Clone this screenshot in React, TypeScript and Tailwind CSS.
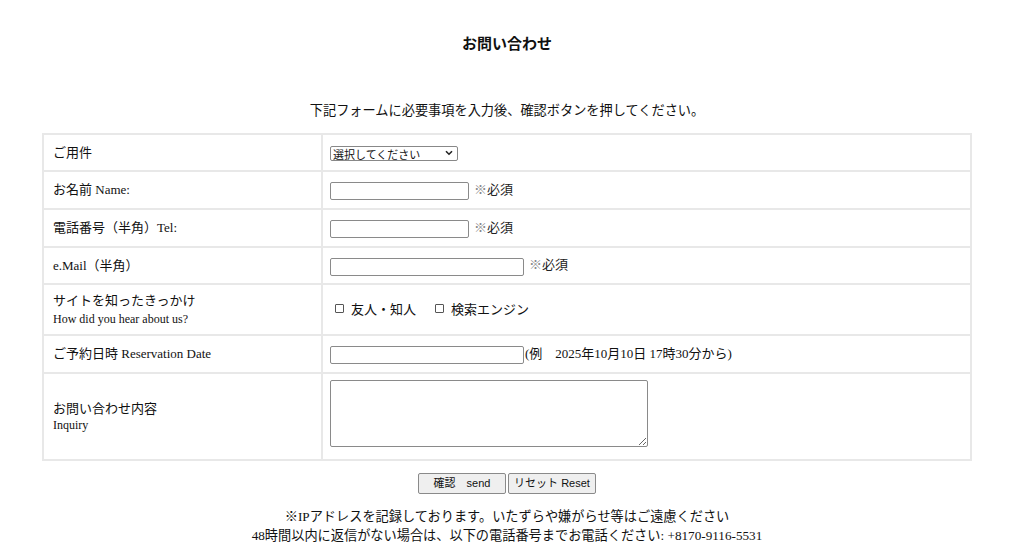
import React from "react";

const cellL = "border-2 border-[#e8e8e8] pl-[9px] pr-2 align-middle text-left";
const cellR = "border-2 border-[#e8e8e8] pl-[7px] pr-2 align-middle text-left";

function Req() {
  return <span className="ml-[5px] text-[13px] text-[#222]"><span className="text-[#888]">※</span>必須</span>;
}

function Box() {
  return <span className="inline-block w-[9px] h-[9px] border border-[#555] rounded-[1px] mr-[7px] align-middle relative top-[-2px]" />;
}

export default function App() {
  return (
    <div className="w-[1024px] h-[545px] bg-white text-[#111] font-['Liberation_Serif','Noto_Sans_CJK_JP',serif] text-[13px] overflow-hidden">
      <div className="w-[1014px]">
        <div className="pt-[32px] text-center font-['Noto_Sans_CJK_JP',sans-serif] font-bold text-[15px] leading-[21px]">お問い合わせ</div>
        <div className="mt-[48px] text-center leading-[20px] text-[13.2px]">下記フォームに必要事項を入力後、確認ボタンを押してください。</div>
        <div className="mt-[12px] pl-[42px] pr-[42px]">
          <table className="w-full border-collapse border-2 border-[#e8e8e8]">
            <tbody>
              <tr className="h-[37px]">
                <td className={cellL + " w-[279px]"}>ご用件</td>
                <td className={cellR}>
                  <div className="relative inline-block align-middle">
                    <select className="appearance-none w-[128px] h-[15px] border border-[#888] rounded-[2px] bg-white text-[11px] leading-[12px] pl-[2px] font-['Noto_Sans_CJK_JP',sans-serif] text-[#111] block">
                      <option>選択してください</option>
                    </select>
                    <svg className="absolute right-[5px] top-[4px] pointer-events-none" width="8" height="6" viewBox="0 0 8 6">
                      <path d="M1 1.2 L4 4.2 L7 1.2" fill="none" stroke="#222" strokeWidth="1.6" />
                    </svg>
                  </div>
                </td>
              </tr>
              <tr className="h-[38px]">
                <td className={cellL}>お名前 Name:</td>
                <td className={cellR}>
                  <input className="w-[139px] h-[18px] border border-[#8a8a8a] rounded-[2px] align-middle" />
                  <Req />
                </td>
              </tr>
              <tr className="h-[38px]">
                <td className={cellL}>電話番号（半角）Tel:</td>
                <td className={cellR}>
                  <input className="w-[139px] h-[18px] border border-[#8a8a8a] rounded-[2px] align-middle" />
                  <Req />
                </td>
              </tr>
              <tr className="h-[37px]">
                <td className={cellL}>e.Mail（半角）</td>
                <td className={cellR}>
                  <input className="w-[194px] h-[18px] border border-[#8a8a8a] rounded-[2px] align-middle" />
                  <Req />
                </td>
              </tr>
              <tr className="h-[51px]">
                <td className={cellL + " leading-[18px]"}>
                  <div>サイトを知ったきっかけ</div>
                  <div className="text-[12px]">How did you hear about us?</div>
                </td>
                <td className={cellR}>
                  <span className="ml-[5px]"><Box />友人・知人</span>
                  <span className="ml-[19px]"><Box />検索エンジン</span>
                </td>
              </tr>
              <tr className="h-[38px]">
                <td className={cellL}>ご予約日時 Reservation Date</td>
                <td className={cellR}>
                  <input className="w-[194px] h-[18px] border border-[#8a8a8a] rounded-[2px] align-middle" />
                  <span className="ml-[1px]">(例　2025年10月10日 17時30分から)</span>
                </td>
              </tr>
              <tr className="h-[87px]">
                <td className={cellL + " leading-[17px]"}>
                  <div>お問い合わせ内容</div>
                  <div className="text-[12px]">Inquiry</div>
                </td>
                <td className={cellR}>
                  <textarea className="block w-[318px] h-[67px] border border-[#8a8a8a] rounded-[2px] mb-[7px]" />
                </td>
              </tr>
            </tbody>
          </table>
        </div>
        <div className="mt-[12px] flex justify-center gap-[2px] font-['Liberation_Sans','Noto_Sans_CJK_JP',sans-serif] text-[11px]">
          <button className="w-[88px] h-[21px] bg-[#efefef] border border-[#8a8a8a] rounded-[2px] text-[#111]">確認　send</button>
          <button className="w-[88px] h-[21px] bg-[#efefef] border border-[#8a8a8a] rounded-[2px] text-[#111]">リセット Reset</button>
        </div>
        <div className="mt-[13px] text-center leading-[19px] text-[13.2px]">
          <div>※IPアドレスを記録しております。いたずらや嫌がらせ等はご遠慮ください</div>
          <div>48時間以内に返信がない場合は、以下の電話番号までお電話ください: +8170-9116-5531</div>
        </div>
      </div>
    </div>
  );
}
